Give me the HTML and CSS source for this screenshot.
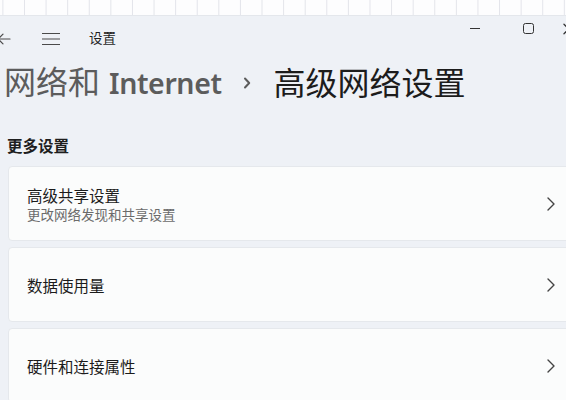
FILE: index.html
```html
<!DOCTYPE html>
<html lang="zh-CN">
<head>
<meta charset="utf-8">
<title>设置</title>
<link rel="stylesheet" href="styles.css">
</head>
<body>
<div class="desk"></div>
<div class="window">
  <div class="titlebar">
    <svg class="back" width="14" height="12" viewBox="0 0 14 12"><path d="M13 6H1.5M6 1.2L1.2 6L6 10.8" fill="none" stroke="#4a4a4a" stroke-width="1.2" stroke-linecap="round" stroke-linejoin="round"/></svg>
    <svg class="menu" width="18" height="14" viewBox="0 0 18 14"><path d="M0.5 1.5H17.5M0.5 7H17.5M0.5 12.5H17.5" stroke="#4a4a4a" stroke-width="1.2" stroke-linecap="round"/></svg>
    <span class="app-title">设置</span>
    <div class="caption">
      <div class="cbtn"><span class="min"></span></div>
      <div class="cbtn"><span class="max"></span></div>
      <div class="cbtn close"><svg width="12" height="12" viewBox="0 0 12 12"><path d="M1 1L11 11M11 1L1 11" stroke="#333" stroke-width="1.3" stroke-linecap="round"/></svg></div>
    </div>
  </div>

  <h1 class="crumb">
    <span class="crumb-parent">网络和<span class="latin">Internet</span></span>
    <svg class="crumb-sep" width="8" height="12" viewBox="0 0 8 12"><path d="M2 1.5L6.2 6L2 10.5" fill="none" stroke="#5c5c5c" stroke-width="2" stroke-linecap="round" stroke-linejoin="round"/></svg>
    <span class="crumb-current">高级网络设置</span>
  </h1>

  <h2 class="section">更多设置</h2>

  <div class="cards">
    <div class="card">
      <div class="card-text">
        <div class="card-title">高级共享设置</div>
        <div class="card-sub">更改网络发现和共享设置</div>
      </div>
      <svg class="chev" width="10" height="16" viewBox="0 0 10 16"><path d="M2 2L8 8L2 14" fill="none" stroke="#444" stroke-width="1.4" stroke-linecap="round" stroke-linejoin="round"/></svg>
    </div>
    <div class="card">
      <div class="card-text">
        <div class="card-title">数据使用量</div>
      </div>
      <svg class="chev" width="10" height="16" viewBox="0 0 10 16"><path d="M2 2L8 8L2 14" fill="none" stroke="#444" stroke-width="1.4" stroke-linecap="round" stroke-linejoin="round"/></svg>
    </div>
    <div class="card">
      <div class="card-text">
        <div class="card-title">硬件和连接属性</div>
      </div>
      <svg class="chev" width="10" height="16" viewBox="0 0 10 16"><path d="M2 2L8 8L2 14" fill="none" stroke="#444" stroke-width="1.4" stroke-linecap="round" stroke-linejoin="round"/></svg>
    </div>
  </div>
</div>
</body>
</html>
```

FILE: styles.css
```css
html, body {
  margin: 0;
  padding: 0;
  width: 566px;
  height: 400px;
  overflow: hidden;
  background: #eef1f6;
  font-family: "Noto Sans", "Noto Sans CJK SC", sans-serif;
}

.desk {
  height: 15px;
  background-color: #fdfdfe;
  background-image: linear-gradient(to right, #e3e4ea 1px, transparent 1px);
  background-size: 21.6px 100%;
  background-position: 2.4px 0;
}

.window {
  background: #eef1f6;
  border-top: 1px solid #e4e7ec;
  height: 400px;
  overflow: hidden;
  padding-left: 8px;
}

.titlebar {
  display: flex;
  align-items: center;
  height: 45px;
  margin-left: -8px;
}

.back {
  margin-left: -3px;
  margin-top: 1px;
}

.menu {
  margin-left: 31px;
  margin-top: 1px;
}

.app-title {
  margin-left: 29px;
  font-family: "Noto Sans CJK SC", sans-serif;
  font-size: 13.5px;
  color: #1e1e1e;
  line-height: 18px;
  margin-top: -3px;
}

.caption {
  margin-left: auto;
  align-self: flex-start;
  display: flex;
  height: 25px;
  width: 117.5px;
}

.cbtn {
  width: 53px;
  flex: none;
  display: flex;
  align-items: center;
  justify-content: center;
}

.cbtn.close {
  width: 11.5px;
  justify-content: flex-start;
  padding-left: 8px;
}

.min {
  width: 10px;
  height: 1.3px;
  background: #333;
}

.max {
  width: 9px;
  height: 9px;
  border: 1.4px solid #333;
  border-radius: 2.5px;
}

.crumb {
  display: flex;
  align-items: center;
  margin: 0 0 0 -4px;
  height: 40px;
  font-size: 32px;
  font-weight: 400;
  line-height: 40px;
  white-space: nowrap;
}

.crumb-parent {
  color: #5c5c5c;
  font-family: "Noto Sans CJK SC", sans-serif;
}

.latin {
  font-family: "Noto Sans", sans-serif;
  font-size: 28.5px;
  font-weight: 600;
  letter-spacing: -0.4px;
  margin-left: 9px;
}

.crumb-sep {
  margin: 3px 0 0 21px;
  flex: none;
}

.crumb-current {
  margin-left: 23px;
  color: #1c1c1c;
  font-family: "Noto Sans CJK SC", sans-serif;
}

.section {
  margin: 33px 0 0 -1px;
  font-family: "Noto Sans CJK SC", sans-serif;
  font-size: 15.5px;
  font-weight: 600;
  line-height: 22px;
  color: #1e1e1e;
}

.cards {
  margin-top: 10px;
  margin-right: -20px;
  display: flex;
  flex-direction: column;
  gap: 6px;
}

.card {
  box-sizing: border-box;
  height: 75px;
  background: #fbfcfc;
  border: 1px solid #e5e8ec;
  border-radius: 4px;
  display: flex;
  align-items: center;
  justify-content: space-between;
  padding: 0 29px 0 18px;
}

.card-text {
  font-family: "Noto Sans CJK SC", sans-serif;
}

.card-title {
  font-size: 15.5px;
  line-height: 20px;
  color: #1b1b1b;
}

.card-sub {
  font-size: 13.5px;
  line-height: 18px;
  color: #6b6b6b;
}

.chev {
  flex: none;
}
```
